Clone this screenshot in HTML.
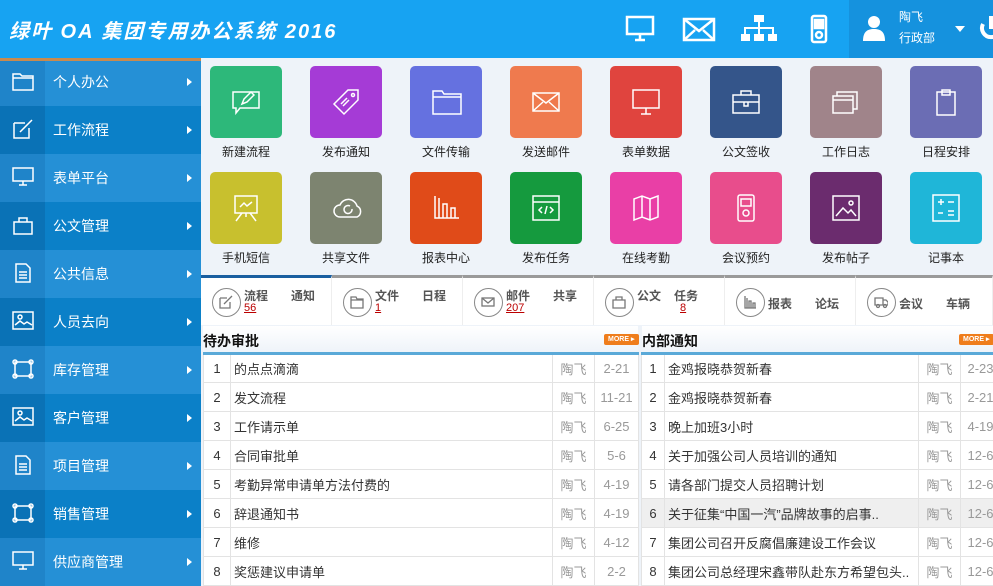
<!DOCTYPE html>
<html><head><meta charset="utf-8"><style>
*{margin:0;padding:0;box-sizing:border-box}
body{width:993px;height:584px;overflow:hidden;background:#eef3f9;font-family:"Liberation Sans","Noto Sans CJK SC",sans-serif;position:relative}
.hd{position:absolute;left:0;top:0;width:993px;height:58px;background:#17a3f2}
.logo{position:absolute;left:9px;top:15px;color:#fff;font-size:20px;font-style:italic;font-weight:bold;letter-spacing:2px}
.user{position:absolute;left:849px;top:0;width:144px;height:58px;background:#1592de}
.side{position:absolute;left:0;top:58px;width:201px;height:526px}
.it{position:absolute;left:0;width:201px;height:48px;color:#fff;font-size:14px;font-weight:normal}
.it .ic{position:absolute;left:0;top:0;width:45px;height:48px}
.it .t{position:absolute;left:53px;top:14px}
.it .ar{position:absolute;left:187px;top:20px;width:0;height:0;border-left:5px solid #fff;border-top:4px solid transparent;border-bottom:4px solid transparent}
.it svg{position:absolute;left:12px;top:13px}
.l{background:#2590d6}.l .ic{background:#1f84c9}
.d{background:#0b80c8}.d .ic{background:#0a72b6}
.tile{position:absolute;width:72px;height:72px;border-radius:5px}
.tile svg{position:absolute;left:22px;top:22px}
.lab{position:absolute;width:100px;text-align:center;font-size:12px;color:#222}
.stats{position:absolute;left:201px;top:275px;width:792px;height:50px;background:#fff}
.seg{position:absolute;top:0;height:50px;border-top:3px solid #9a9a9a;border-right:1px solid #eee}
.seg .c{position:absolute;left:11px;top:10px;width:29px;height:29px;border:1.5px solid #888;border-radius:50%}
.seg .c svg{position:absolute;left:6px;top:6px}
.seg .a{position:absolute;left:43px;top:9px;font-size:12px;font-weight:bold;color:#555}
.seg .b{position:absolute;left:90px;top:9px;font-size:12px;font-weight:bold;color:#555}
.seg .n{position:absolute;left:43px;top:24px;font-size:11px;color:#b00;text-decoration:underline}
.sh{position:absolute;top:326px;height:27px;font-size:14px;font-weight:bold;color:#111;background:linear-gradient(#fff,#eef3f9)}
.more{position:absolute;top:334px;width:35px;height:11px;background:#ef7d1c;border-radius:2px;color:#fff;font-size:7px;line-height:11px;padding-left:4px;font-weight:bold}
table{position:absolute;border-collapse:collapse;background:#fff;font-size:13px;color:#333;border-top:3px solid #5aa9d8}
td{height:29px;border:1px solid #e3e3e3;white-space:nowrap;overflow:hidden;padding-left:3px}
td.n{text-align:center;color:#333;padding-left:0}
td.p,td.dt{color:#999;text-align:center;padding-left:0}
</style></head><body>
<div class="hd">
<div class="logo">绿叶 OA 集团专用办公系统 2016</div>
<svg style="position:absolute;left:625px;top:15px" width="30" height="28" fill="none" stroke="#fff" stroke-width="2.5"><rect x="2" y="2" width="26" height="17"/><path d="M10 25h10M15 19v6"/></svg>
<svg style="position:absolute;left:682px;top:17px" width="34" height="25" fill="none" stroke="#fff" stroke-width="2.5"><rect x="2" y="2" width="30" height="21"/><path d="M2 2l15 12 15-12M2 23l11-10M32 23l-11-10"/></svg>
<svg style="position:absolute;left:741px;top:15px" width="36" height="28" fill="#fff"><rect x="13" y="0" width="10" height="7"/><rect x="17" y="7" width="2" height="6"/><rect x="3" y="12" width="30" height="2"/><rect x="3" y="12" width="2" height="8"/><rect x="31" y="12" width="2" height="8"/><rect x="17" y="12" width="2" height="8"/><rect x="0" y="19" width="9" height="7"/><rect x="13" y="19" width="10" height="7"/><rect x="27" y="19" width="9" height="7"/></svg>
<svg style="position:absolute;left:810px;top:14px" width="18" height="30" fill="none" stroke="#fff" stroke-width="2.5"><rect x="2" y="2" width="14" height="26" rx="2"/><rect x="5" y="6" width="8" height="8" fill="#fff"/><circle cx="9" cy="21" r="3"/></svg>
<div class="user">
<svg style="position:absolute;left:14px;top:15px" width="22" height="26" fill="#fff"><circle cx="11" cy="7" r="6"/><path d="M0 26c0-9 4-12 11-12s11 3 11 12z"/></svg>
<div style="position:absolute;left:50px;top:7px;color:#fff;font-size:12px;line-height:21px">陶飞<br>行政部</div>
<div style="position:absolute;left:106px;top:26px;border-top:6px solid #fff;border-left:5px solid transparent;border-right:5px solid transparent"></div>
<svg style="position:absolute;left:130px;top:16px" width="16" height="26" fill="none" stroke="#fff" stroke-width="4"><path d="M4 8a9 9 0 1 0 16 0M12 0v13"/></svg>
</div>
</div>
<div class="side">
<div style="position:absolute;left:0;top:0;width:201px;height:3px;background:#c98a4e;z-index:2"></div>
<div class="it l" style="top:0"><div class="ic"><svg width="22" height="20" fill="none" stroke="#fff" stroke-width="1.5"><path d="M1 3h7l2 2h11v14H1zM1 7h20"/></svg></div><span class="t">个人办公</span><i class="ar"></i></div>
<div class="it d" style="top:48px"><div class="ic"><svg width="22" height="20" fill="none" stroke="#fff" stroke-width="1.5"><path d="M2 4h11M2 4v15h15V9M8 13l12-12"/></svg></div><span class="t">工作流程</span><i class="ar"></i></div>
<div class="it l" style="top:96px"><div class="ic"><svg width="22" height="20" fill="none" stroke="#fff" stroke-width="1.5"><rect x="1" y="1" width="20" height="13"/><path d="M7 18h8M11 14v4"/></svg></div><span class="t">表单平台</span><i class="ar"></i></div>
<div class="it d" style="top:144px"><div class="ic"><svg width="22" height="20" fill="none" stroke="#fff" stroke-width="1.5"><path d="M2 7h18v12H2zM7 7V3h8v4"/></svg></div><span class="t">公文管理</span><i class="ar"></i></div>
<div class="it l" style="top:192px"><div class="ic"><svg width="22" height="20" fill="none" stroke="#fff" stroke-width="1.5"><path d="M4 1h10l4 4v14H4zM7 9h8M7 12h8M7 15h8"/></svg></div><span class="t">公共信息</span><i class="ar"></i></div>
<div class="it d" style="top:240px"><div class="ic"><svg width="22" height="20" fill="none" stroke="#fff" stroke-width="1.5"><rect x="1" y="1" width="20" height="17"/><path d="M3 14l5-4 4 3 3-2 5 3"/><circle cx="8" cy="6" r="2"/></svg></div><span class="t">人员去向</span><i class="ar"></i></div>
<div class="it l" style="top:288px"><div class="ic"><svg width="22" height="20" fill="none" stroke="#fff" stroke-width="1.5"><rect x="3" y="3" width="16" height="14"/><circle cx="3" cy="3" r="2"/><circle cx="19" cy="3" r="2"/><circle cx="3" cy="17" r="2"/><circle cx="19" cy="17" r="2"/></svg></div><span class="t">库存管理</span><i class="ar"></i></div>
<div class="it d" style="top:336px"><div class="ic"><svg width="22" height="20" fill="none" stroke="#fff" stroke-width="1.5"><rect x="1" y="1" width="20" height="17"/><path d="M3 14l5-4 4 3 3-2 5 3"/><circle cx="8" cy="6" r="2"/></svg></div><span class="t">客户管理</span><i class="ar"></i></div>
<div class="it l" style="top:384px"><div class="ic"><svg width="22" height="20" fill="none" stroke="#fff" stroke-width="1.5"><path d="M4 1h10l4 4v14H4zM7 9h8M7 12h8M7 15h8"/></svg></div><span class="t">项目管理</span><i class="ar"></i></div>
<div class="it d" style="top:432px"><div class="ic"><svg width="22" height="20" fill="none" stroke="#fff" stroke-width="1.5"><rect x="3" y="3" width="16" height="14"/><circle cx="3" cy="3" r="2"/><circle cx="19" cy="3" r="2"/><circle cx="3" cy="17" r="2"/><circle cx="19" cy="17" r="2"/></svg></div><span class="t">销售管理</span><i class="ar"></i></div>
<div class="it l" style="top:480px"><div class="ic"><svg width="22" height="20" fill="none" stroke="#fff" stroke-width="1.5"><rect x="1" y="1" width="20" height="13"/><path d="M7 18h8M11 14v4"/></svg></div><span class="t">供应商管理</span><i class="ar"></i></div>
</div>

<div class="tile" style="left:210px;top:66px;background:#2db87a"><svg width="28" height="28" fill="none" stroke="#fff" stroke-width="1.5"><path d="M1 4h26v16H8l-4 5v-5H1z"/><path d="M10 16l2-5 7-7 3 3-7 7z"/></svg></div>
<div class="tile" style="left:310px;top:66px;background:#a53bd6"><svg width="28" height="28" fill="none" stroke="#fff" stroke-width="1.5"><path d="M16 2h10v10L12 26 2 16z"/><circle cx="21" cy="7" r="1.5"/><path d="M9 16l6-6M11 18l6-6"/></svg></div>
<div class="tile" style="left:410px;top:66px;background:#6571e0"><svg width="30" height="28" fill="none" stroke="#fff" stroke-width="1.5"><path d="M1 3h9l2 3h17v20H1zM1 9h28"/></svg></div>
<div class="tile" style="left:510px;top:66px;background:#ef7a4e"><svg width="28" height="28" fill="none" stroke="#fff" stroke-width="1.5"><rect x="1" y="5" width="26" height="18"/><path d="M1 5l13 10 13-10M1 23l10-9M27 23l-10-9"/></svg></div>
<div class="tile" style="left:610px;top:66px;background:#e0443e"><svg width="28" height="28" fill="none" stroke="#fff" stroke-width="1.5"><rect x="1" y="2" width="26" height="18"/><path d="M9 26h10M14 20v6"/></svg></div>
<div class="tile" style="left:710px;top:66px;background:#34558a"><svg width="28" height="28" fill="none" stroke="#fff" stroke-width="1.5"><rect x="1" y="7" width="26" height="18"/><path d="M9 7V3h10v4M1 14h26M12 14v4h4v-4"/></svg></div>
<div class="tile" style="left:810px;top:66px;background:#a0848a"><svg width="28" height="28" fill="none" stroke="#fff" stroke-width="1.5"><rect x="1" y="8" width="20" height="17"/><path d="M5 8V4h20v17h-4M1 12h20"/></svg></div>
<div class="tile" style="left:910px;top:66px;background:#6b6db4"><svg width="28" height="28" fill="none" stroke="#fff" stroke-width="1.5"><path d="M5 4h18v23H5zM10 2h8v5h-8z"/></svg></div>
<div class="lab" style="left:196px;top:143px">新建流程</div><div class="lab" style="left:296px;top:143px">发布通知</div><div class="lab" style="left:396px;top:143px">文件传输</div><div class="lab" style="left:496px;top:143px">发送邮件</div><div class="lab" style="left:596px;top:143px">表单数据</div><div class="lab" style="left:696px;top:143px">公文签收</div><div class="lab" style="left:796px;top:143px">工作日志</div><div class="lab" style="left:896px;top:143px">日程安排</div>

<div class="tile" style="left:210px;top:172px;background:#c8c02e"><svg width="28" height="28" fill="none" stroke="#fff" stroke-width="1.5"><rect x="3" y="2" width="22" height="17"/><path d="M8 13l4-4 3 3 5-4M14 19v4M4 27l6-8M24 27l-6-8"/></svg></div>
<div class="tile" style="left:310px;top:172px;background:#7d8470"><svg width="32" height="28" fill="none" stroke="#fff" stroke-width="1.5"><path d="M8 23a6 6 0 0 1 0-12 9 9 0 0 1 17 1 6 6 0 0 1 0 11z"/><path d="M20 15a4 4 0 1 1-2-3"/></svg></div>
<div class="tile" style="left:410px;top:172px;background:#e04b19"><svg width="28" height="28" fill="none" stroke="#fff" stroke-width="1.5"><path d="M3 2v22h24M7 4v20M11 10h4v14h-4zM19 14h4v10h-4z"/></svg></div>
<div class="tile" style="left:510px;top:172px;background:#159a3e"><svg width="28" height="28" fill="none" stroke="#fff" stroke-width="1.5"><rect x="1" y="2" width="26" height="24"/><path d="M1 8h26M10 13l-3 3 3 3M18 13l3 3-3 3M15 12l-2 8"/></svg></div>
<div class="tile" style="left:610px;top:172px;background:#e93fa6"><svg width="28" height="28" fill="none" stroke="#fff" stroke-width="1.5"><path d="M2 5l8-3 8 3 8-3v21l-8 3-8-3-8 3zM10 2v21M18 5v21"/></svg></div>
<div class="tile" style="left:710px;top:172px;background:#e84d8c"><svg width="28" height="28" fill="none" stroke="#fff" stroke-width="1.5"><rect x="6" y="1" width="16" height="26" rx="2"/><rect x="9" y="5" width="10" height="7"/><circle cx="14" cy="19" r="3"/></svg></div>
<div class="tile" style="left:810px;top:172px;background:#6b2c6e"><svg width="28" height="28" fill="none" stroke="#fff" stroke-width="1.5"><rect x="1" y="2" width="26" height="24"/><path d="M4 22l7-8 5 5 3-3 5 6"/><circle cx="19" cy="9" r="2"/></svg></div>
<div class="tile" style="left:910px;top:172px;background:#1fb6d8"><svg width="28" height="28" fill="none" stroke="#fff" stroke-width="1.5"><rect x="1" y="1" width="26" height="26"/><path d="M6 8h6M9 5v6M16 8h6M6 19l5 0M16 17h6M16 21h6"/></svg></div>
<div class="lab" style="left:196px;top:249px">手机短信</div><div class="lab" style="left:296px;top:249px">共享文件</div><div class="lab" style="left:396px;top:249px">报表中心</div><div class="lab" style="left:496px;top:249px">发布任务</div><div class="lab" style="left:596px;top:249px">在线考勤</div><div class="lab" style="left:696px;top:249px">会议预约</div><div class="lab" style="left:796px;top:249px">发布帖子</div><div class="lab" style="left:896px;top:249px">记事本</div>

<div class="stats">
<div class="seg" style="left:0;width:131px;border-top-color:#1a5fa0"><i class="c"><svg width="14" height="14" fill="none" stroke="#777" stroke-width="1.3"><path d="M1 3h7M1 3v10h10V7M5 9l8-8"/></svg></i><span class="a">流程</span><span class="b">通知</span><span class="n">56</span></div>
<div class="seg" style="left:131px;width:131px"><i class="c"><svg width="14" height="14" fill="none" stroke="#777" stroke-width="1.3"><path d="M1 2h5l1 2h6v9H1zM1 5h12"/></svg></i><span class="a">文件</span><span class="b">日程</span><span class="n">1</span></div>
<div class="seg" style="left:262px;width:131px"><i class="c"><svg width="14" height="14" fill="none" stroke="#777" stroke-width="1.3"><rect x="1" y="3" width="12" height="8"/><path d="M1 3l6 5 6-5"/></svg></i><span class="a">邮件</span><span class="b">共享</span><span class="n">207</span></div>
<div class="seg" style="left:393px;width:131px"><i class="c"><svg width="14" height="14" fill="none" stroke="#777" stroke-width="1.3"><path d="M1 5h12v8H1zM4 5V2h6v3"/></svg></i><span class="a">公文</span><span class="b" style="left:80px">任务</span><span class="n" style="left:86px">8</span></div>
<div class="seg" style="left:524px;width:131px"><i class="c"><svg width="14" height="14" fill="none" stroke="#777" stroke-width="1.3"><path d="M2 1v12h11M4 3v10M6 6h2v7H6zM10 8h2v5h-2z"/></svg></i><span class="a" style="top:17px">报表</span><span class="b" style="top:17px">论坛</span></div>
<div class="seg" style="left:655px;width:137px"><i class="c"><svg width="14" height="14" fill="none" stroke="#777" stroke-width="1.3"><path d="M1 3h8v7H1zM9 5h3l2 2v3H9"/><circle cx="4" cy="11" r="1.5"/><circle cx="11" cy="11" r="1.5"/></svg></i><span class="a" style="top:17px">会议</span><span class="b" style="top:17px">车辆</span></div>
</div>

<div class="sh" style="left:203px;width:435px;padding-top:5px">待办审批</div>
<div class="more" style="left:604px">MORE ▸</div>
<div class="sh" style="left:642px;width:351px;padding-top:5px">内部通知</div>
<div class="more" style="left:959px">MORE ▸</div>

<table style="left:203px;top:352px;width:436px">
<colgroup><col style="width:27px"><col><col style="width:42px"><col style="width:44px"></colgroup>
<tr><td class="n">1</td><td>的点点滴滴</td><td class="p">陶飞</td><td class="dt">2-21</td></tr>
<tr><td class="n">2</td><td>发文流程</td><td class="p">陶飞</td><td class="dt">11-21</td></tr>
<tr><td class="n">3</td><td>工作请示单</td><td class="p">陶飞</td><td class="dt">6-25</td></tr>
<tr><td class="n">4</td><td>合同审批单</td><td class="p">陶飞</td><td class="dt">5-6</td></tr>
<tr><td class="n">5</td><td>考勤异常申请单方法付费的</td><td class="p">陶飞</td><td class="dt">4-19</td></tr>
<tr><td class="n">6</td><td>辞退通知书</td><td class="p">陶飞</td><td class="dt">4-19</td></tr>
<tr><td class="n">7</td><td>维修</td><td class="p">陶飞</td><td class="dt">4-12</td></tr>
<tr><td class="n">8</td><td>奖惩建议申请单</td><td class="p">陶飞</td><td class="dt">2-2</td></tr>
</table>
<table style="left:641px;top:352px;width:360px">
<colgroup><col style="width:23px"><col><col style="width:42px"><col style="width:40px"></colgroup>
<tr><td class="n">1</td><td>金鸡报晓恭贺新春</td><td class="p">陶飞</td><td class="dt">2-23</td></tr>
<tr><td class="n">2</td><td>金鸡报晓恭贺新春</td><td class="p">陶飞</td><td class="dt">2-21</td></tr>
<tr><td class="n">3</td><td>晚上加班3小时</td><td class="p">陶飞</td><td class="dt">4-19</td></tr>
<tr><td class="n">4</td><td>关于加强公司人员培训的通知</td><td class="p">陶飞</td><td class="dt">12-6</td></tr>
<tr><td class="n">5</td><td>请各部门提交人员招聘计划</td><td class="p">陶飞</td><td class="dt">12-6</td></tr>
<tr style="background:#efefef"><td class="n">6</td><td>关于征集“中国一汽”品牌故事的启事..</td><td class="p">陶飞</td><td class="dt">12-6</td></tr>
<tr><td class="n">7</td><td>集团公司召开反腐倡廉建设工作会议</td><td class="p">陶飞</td><td class="dt">12-6</td></tr>
<tr><td class="n">8</td><td>集团公司总经理宋鑫带队赴东方希望包头..</td><td class="p">陶飞</td><td class="dt">12-6</td></tr>
</table>
</body></html>
